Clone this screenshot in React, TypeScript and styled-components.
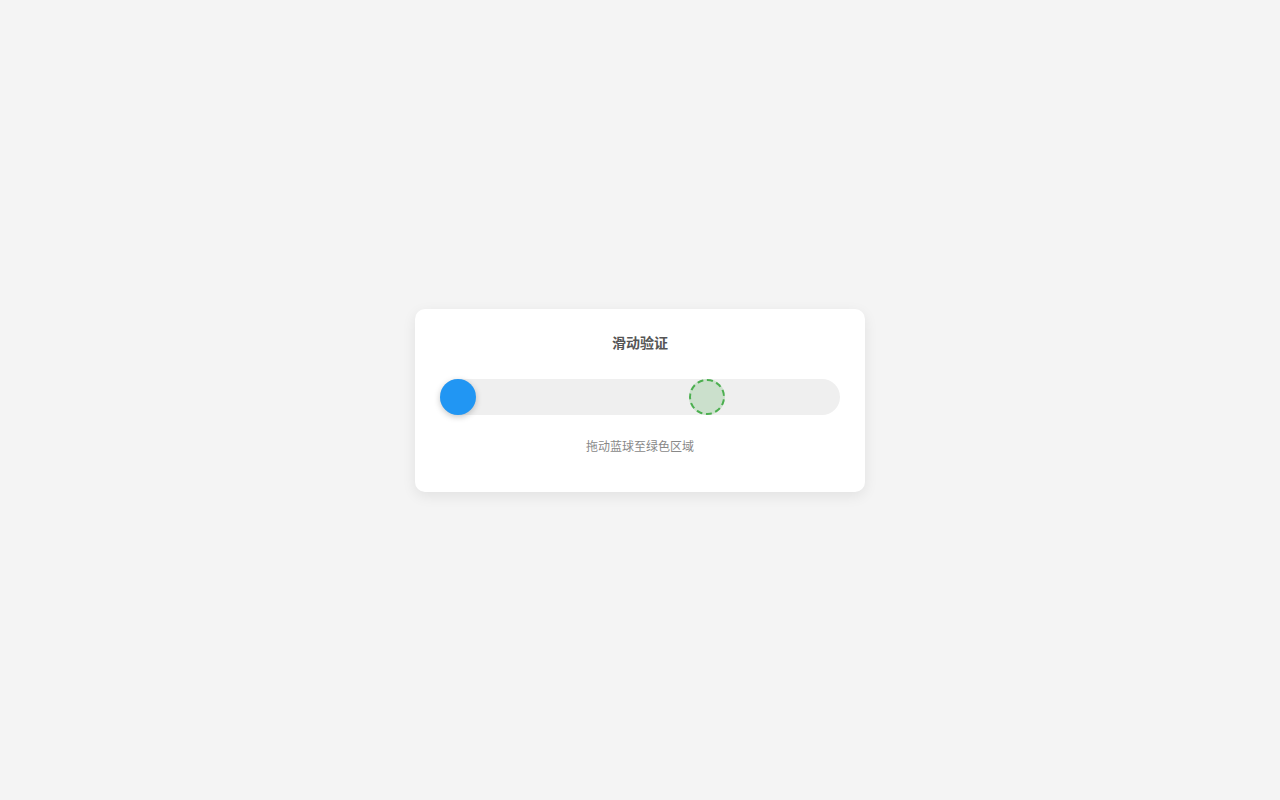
import styled, { createGlobalStyle } from "styled-components";

const GlobalStyle = createGlobalStyle`
  html, body {
    margin: 0;
    padding: 0;
    background: #f4f4f4;
    font-family: "Noto Sans", "Noto Sans CJK SC", sans-serif;
  }
`;

const Page = styled.main`
  min-height: 100vh;
  display: flex;
  align-items: center;
  justify-content: center;
`;

const Card = styled.section`
  width: 450px;
  box-sizing: border-box;
  padding: 25px 25px 37px;
  background: #fff;
  border-radius: 10px;
  box-shadow: 0 4px 14px rgba(0, 0, 0, 0.08);
  display: flex;
  flex-direction: column;
  align-items: center;
`;

const Title = styled.h3`
  margin: 0 0 27px;
  font-size: 14px;
  line-height: 18px;
  font-weight: 700;
  color: #555;
`;

const Track = styled.div`
  position: relative;
  width: 100%;
  height: 36px;
  border-radius: 18px;
  background: #efefef;
`;

const Knob = styled.div<{ $left: number }>`
  position: absolute;
  top: 0;
  left: ${(p) => p.$left}px;
  width: 36px;
  height: 36px;
  border-radius: 50%;
  background: #2196f3;
  box-shadow: 0 2px 6px rgba(0, 0, 0, 0.22);
  cursor: grab;
`;

const Target = styled.div<{ $left: number }>`
  position: absolute;
  top: 0;
  left: ${(p) => p.$left}px;
  width: 36px;
  height: 36px;
  box-sizing: border-box;
  border-radius: 50%;
  border: 2px dashed #4caf50;
  background: rgba(76, 175, 80, 0.22);
`;

const Hint = styled.p`
  margin: 24px 0 0;
  font-size: 12px;
  line-height: 16px;
  color: #888;
`;

export default function App() {
  return (
    <>
      <GlobalStyle />
      <Page>
        <Card>
          <Title>滑动验证</Title>
          <Track>
            <Target $left={249} />
            <Knob $left={0} />
          </Track>
          <Hint>拖动蓝球至绿色区域</Hint>
        </Card>
      </Page>
    </>
  );
}
